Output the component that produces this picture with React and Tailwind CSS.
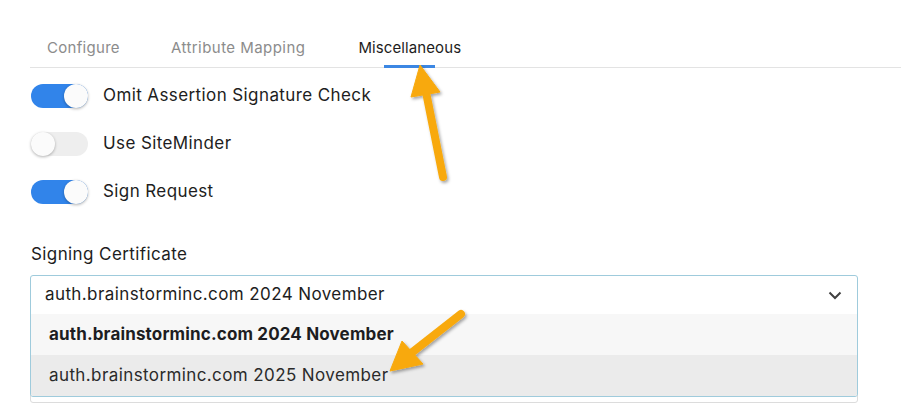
import React from 'react';

function Toggle({ on, label }) {
  return (
    <div className="flex items-center h-[24px]">
      <div className={`relative w-[57px] h-[24px] rounded-full ${on ? 'bg-[#3184ea]' : 'bg-[#eeeeee]'}`}>
        <div
          className={`absolute top-0 w-[24px] h-[24px] rounded-full bg-[#fbfbfb] shadow-[0_1px_3px_rgba(0,0,0,0.3)] ${on ? 'right-0' : 'left-0'}`}
        ></div>
      </div>
      <span className="ml-[15px] text-[17px] tracking-[0.4px] text-[#1d1d21]">{label}</span>
    </div>
  );
}

function Arrows() {
  return (
    <svg className="absolute inset-0 pointer-events-none" width="901" height="413" viewBox="0 0 901 413">
      <defs>
        <filter id="sh" x="-50%" y="-50%" width="200%" height="200%">
          <feDropShadow dx="1.5" dy="2" stdDeviation="1.5" floodColor="#000" floodOpacity="0.35" />
        </filter>
      </defs>
      <g filter="url(#sh)" fill="#f8a90a" stroke="#f8a90a">
        <line x1="443" y1="177" x2="426" y2="92" strokeWidth="8" strokeLinecap="round" />
        <polygon points="420,65 411,97 440,92" strokeWidth="1" strokeLinejoin="round" />
        <line x1="461" y1="314" x2="410" y2="354" strokeWidth="8" strokeLinecap="round" />
        <polygon points="390,371 402,341 423,364" strokeWidth="1" strokeLinejoin="round" />
      </g>
    </svg>
  );
}

export default function App() {
  return (
    <div className="relative w-[901px] h-[413px] bg-white overflow-hidden" style={{ fontFamily: 'Inter, "Noto Sans", sans-serif' }}>
      <div className="pl-[30px] pt-[35px]">
        <div className="flex pl-[17px] h-[33px] border-b border-[#e3e3e3] text-[15px] tracking-[0.3px]">
          <div className="text-[#8c8c8c] leading-[26px]">Configure</div>
          <div className="ml-[51px] text-[#8c8c8c] leading-[26px] tracking-[0.45px]">Attribute Mapping</div>
          <div className="ml-[53px] relative flex flex-col items-center text-[#1d1d21] leading-[26px] tracking-[0.1px]">
            Miscellaneous
            <div className="absolute bottom-[-1px] w-[51px] h-[3px] bg-[#3c87e3]"></div>
          </div>
        </div>

        <div className="flex flex-col gap-[24px] pt-[16px] pl-[1px]">
          <Toggle on label="Omit Assertion Signature Check" />
          <Toggle label="Use SiteMinder" />
          <Toggle on label="Sign Request" />
        </div>

        <div className="pt-[38px] pl-[1px] text-[17px] tracking-[0.4px] text-[#1d1d21] leading-[24px]">Signing Certificate</div>

        <div className="relative mt-[9px] w-[828px]">
          <div className="absolute left-0 right-0 top-[6px] h-[122px] rounded-[3px] border border-[#dcdcdc]"></div>
          <div className="relative rounded-[3px] border border-[#9fcbdc] bg-white overflow-hidden text-[17px] tracking-[0.4px]">
            <div className="flex items-center justify-between h-[38px] pl-[14px] pr-[15px] text-[#1d1d21]">
              <span>auth.brainstorminc.com 2024 November</span>
              <svg width="14" height="9" viewBox="0 0 14 9" fill="none" stroke="#404040" strokeWidth="2">
                <path d="M1.5 1.5 L7 7 L12.5 1.5" />
              </svg>
            </div>
            <div className="flex items-center h-[41px] pl-[18px] bg-[#f7f7f7] font-bold text-[#1d1d21] tracking-[0.15px]">
              auth.brainstorminc.com 2024 November
            </div>
            <div className="flex items-center h-[41px] pl-[18px] bg-[#ebebeb] text-[#2a2a2a]">
              auth.brainstorminc.com 2025 November
            </div>
          </div>
        </div>
      </div>
      <Arrows />
    </div>
  );
}
